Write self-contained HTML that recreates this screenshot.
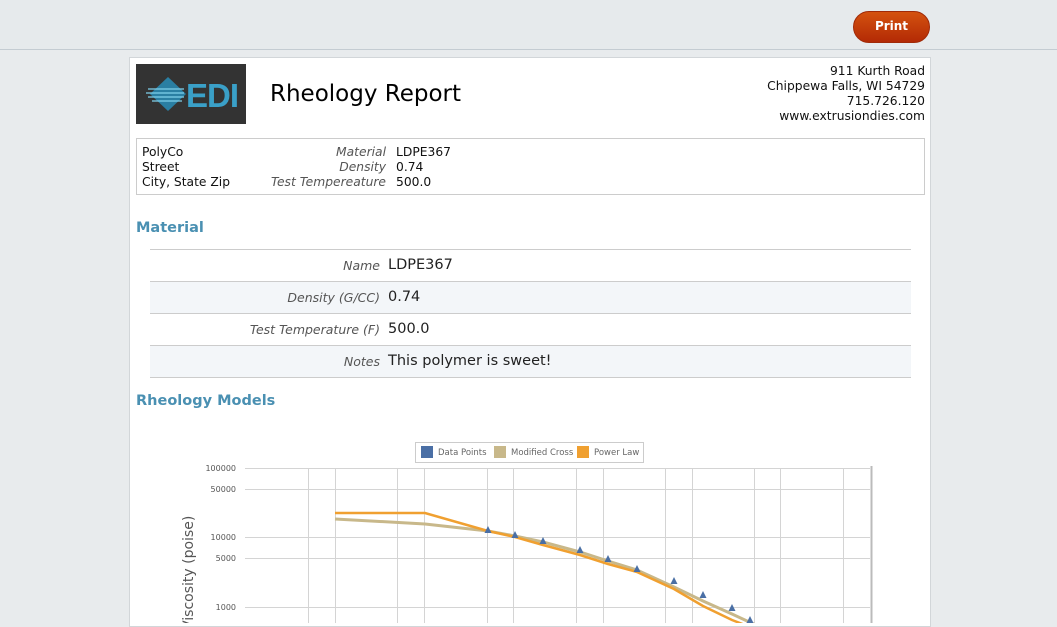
<!DOCTYPE html>
<html><head><style>
*{margin:0;padding:0;box-sizing:border-box}
body{width:1057px;height:623px;overflow:hidden;background:#e8ebed;font-family:"DejaVu Sans","Liberation Sans",sans-serif;position:relative;color:#111}
.hdr{position:absolute;left:0;top:0;width:1057px;height:50px;background:#e6eaec;border-bottom:1px solid #c4ccd2}
.btn{position:absolute;left:853px;top:11px;width:77px;height:32px;border-radius:16px;background:linear-gradient(#d4520f,#b32a05);border:1px solid #a02a08;color:#fff;font-size:12px;font-weight:bold;text-align:center;line-height:29px}
.page{position:absolute;left:129px;top:57px;width:802px;height:570px;background:#fff;border:1px solid #d2d6d9}
.a{position:absolute;white-space:nowrap}
.logo{position:absolute;left:6px;top:6px;width:110px;height:60px;background:#333}
.addr{position:absolute;right:5px;top:6px;text-align:right;font-size:12.3px;line-height:15px}
.box{position:absolute;left:6px;top:80px;width:789px;height:57px;border:1px solid #ccc}
.box .a{font-size:12.3px;line-height:15px}
.lab{color:#555;font-style:italic;text-align:right}
h2{position:absolute;left:6px;font-size:14.5px;color:#4a90b2;font-weight:bold}
.row{position:absolute;left:20px;width:761px;height:32px;border-top:1px solid #ccc}
.row.s{background:#f3f6f9}
.row .l{position:absolute;right:531px;top:8px;font-size:12.5px;color:#555;font-style:italic}
.row .v{position:absolute;left:238px;top:7px;font-size:14.5px;color:#222}
</style></head><body>
<div class="hdr"><div class="btn">Print</div></div>
<div class="page">
 <div class="logo"><svg width="110" height="60">
  <polygon points="32,13 50,30 32,47 14,30" fill="#2a7fa3"/>
  <g stroke="#7fd0ea" stroke-width="1.3"><line x1="12" y1="25" x2="48" y2="25"/><line x1="10" y1="29" x2="48" y2="29"/><line x1="12" y1="33" x2="48" y2="33"/><line x1="16" y1="37" x2="46" y2="37"/></g>
  <text x="50" y="43" font-family="Liberation Sans" font-weight="bold" font-size="33" fill="#3aa0c8" letter-spacing="-1">EDI</text></svg></div>
 <div class="a" style="left:140px;top:23px;font-size:23px;color:#000">Rheology Report</div>
 <div class="addr">911 Kurth Road<br>Chippewa Falls, WI 54729<br>715.726.120<br>www.extrusiondies.com</div>
 <div class="box">
  <div class="a" style="left:5px;top:6px">PolyCo<br>Street<br>City, State Zip</div>
  <div class="a lab" style="right:538px;top:6px">Material<br>Density<br>Test Tempereature</div>
  <div class="a" style="left:259px;top:6px">LDPE367<br>0.74<br>500.0</div>
 </div>
 <h2 style="top:162px">Material</h2>
 <div class="row" style="top:191px"><span class="l">Name</span><span class="v">LDPE367</span></div>
 <div class="row s" style="top:223px"><span class="l">Density (G/CC)</span><span class="v">0.74</span></div>
 <div class="row" style="top:255px"><span class="l">Test Temperature (F)</span><span class="v">500.0</span></div>
 <div class="row s" style="top:287px;border-bottom:1px solid #ccc;height:33px"><span class="l">Notes</span><span class="v">This polymer is sweet!</span></div>
 <h2 style="top:335px">Rheology Models</h2>
</div>
<svg class="a" style="left:0;top:0" width="1057" height="623" font-family="DejaVu Sans" >
 <rect x="415.5" y="442.5" width="228" height="20" fill="#fff" stroke="#ccc"/>
 <rect x="421" y="446" width="12" height="12" fill="#4a6fa5"/><text x="438" y="455" font-size="8.5" fill="#666">Data Points</text>
 <rect x="494" y="446" width="12" height="12" fill="#c8b88a"/><text x="511" y="455" font-size="8.5" fill="#666">Modified Cross</text>
 <rect x="577" y="446" width="12" height="12" fill="#f0a030"/><text x="594" y="455" font-size="8.5" fill="#666">Power Law</text>
 <g stroke="#d4d4d4" stroke-width="1">
  <line x1="245" y1="468.5" x2="870" y2="468.5"/><line x1="245" y1="489.5" x2="870" y2="489.5"/><line x1="245" y1="537.5" x2="870" y2="537.5"/><line x1="245" y1="558.5" x2="870" y2="558.5"/><line x1="245" y1="607.5" x2="870" y2="607.5"/>
  <line x1="308.5" y1="468" x2="308.5" y2="623"/><line x1="335.5" y1="468" x2="335.5" y2="623"/><line x1="397.5" y1="468" x2="397.5" y2="623"/><line x1="424.5" y1="468" x2="424.5" y2="623"/><line x1="487.5" y1="468" x2="487.5" y2="623"/><line x1="513.5" y1="468" x2="513.5" y2="623"/><line x1="576.5" y1="468" x2="576.5" y2="623"/><line x1="603.5" y1="468" x2="603.5" y2="623"/><line x1="665.5" y1="468" x2="665.5" y2="623"/><line x1="692.5" y1="468" x2="692.5" y2="623"/><line x1="754.5" y1="468" x2="754.5" y2="623"/><line x1="780.5" y1="468" x2="780.5" y2="623"/><line x1="843.5" y1="468" x2="843.5" y2="623"/>
 </g>
 <line x1="871.5" y1="466" x2="871.5" y2="623" stroke="#bbb" stroke-width="2"/>
 <g font-size="8" fill="#555" text-anchor="end"><text x="236" y="471">100000</text><text x="236" y="492">50000</text><text x="236" y="540">10000</text><text x="236" y="561">5000</text><text x="236" y="610">1000</text></g>
 <text transform="translate(193,630) rotate(-90)" font-size="14" fill="#555">Viscosity (poise)</text>
 <polyline points="335,519 425,524 488,531 515,536 543,542 580,552 608,561 637,570 674,587 703,601 732,614 760,627" fill="none" stroke="#c8b88a" stroke-width="3"/>
 <polyline points="335,513 425,513 488,531 515,537 543,545 580,555 608,564 637,572 674,589 703,606 732,620 745,625" fill="none" stroke="#f0a030" stroke-width="2.5"/>
 <g fill="#4a6fa5"><path d="M488,526 l3.5,7 h-7z"/><path d="M515,531 l3.5,7 h-7z"/><path d="M543,537 l3.5,7 h-7z"/><path d="M580,546 l3.5,7 h-7z"/><path d="M608,555 l3.5,7 h-7z"/><path d="M637,565 l3.5,7 h-7z"/><path d="M674,577 l3.5,7 h-7z"/><path d="M703,591 l3.5,7 h-7z"/><path d="M732,604 l3.5,7 h-7z"/><path d="M750,616 l3.5,7 h-7z"/></g>
</svg>
</body></html>
